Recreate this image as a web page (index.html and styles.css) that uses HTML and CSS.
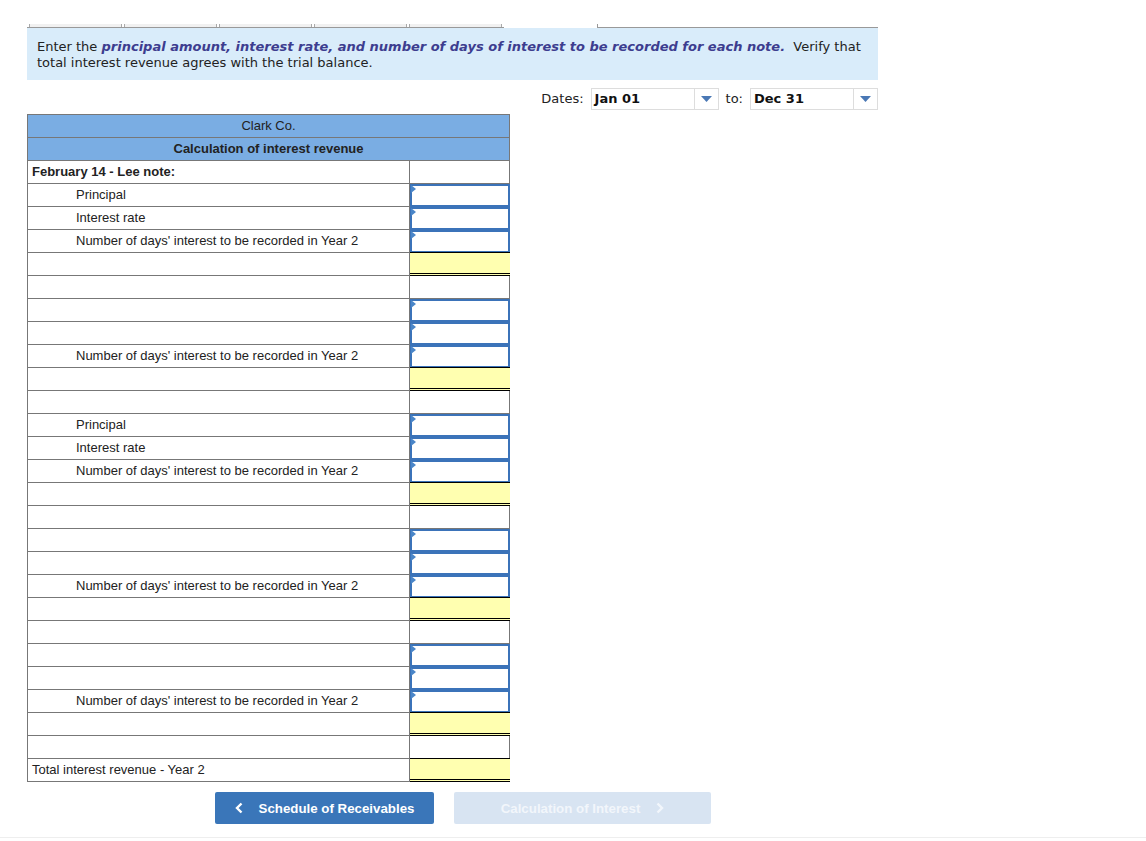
FILE: index.html
```html
<!DOCTYPE html>
<html>
<head>
<meta charset="utf-8">
<link rel="stylesheet" href="styles.css">
</head>
<body>
<div class="page">
  <div class="tabstrip">
    <div class="tabs-left">
      <span class="tab"></span><span class="tab"></span><span class="tab"></span><span class="tab"></span><span class="tab"></span>
    </div>
    <div class="tabs-gap"></div>
    <div class="tabs-right"></div>
  </div>
  <p class="info"><span>Enter the </span><b class="em">principal amount, interest rate, and number of days of interest to be recorded for each note.</b><span>&nbsp; Verify that</span><br><span>total interest revenue agrees with the trial balance.</span></p>
  <div class="dates">
    <span class="dlabel">Dates:</span>
    <div class="select"><span class="sval">Jan 01</span><span class="sarrow"><svg width="11" height="6" viewBox="0 0 11 6"><path d="M0 0H11L5.5 6Z" fill="#4a78b5"/></svg></span></div>
    <span class="dlabel to">to:</span>
    <div class="select"><span class="sval">Dec 31</span><span class="sarrow"><svg width="11" height="6" viewBox="0 0 11 6"><path d="M0 0H11L5.5 6Z" fill="#4a78b5"/></svg></span></div>
  </div>
  <div class="sheet">
    <div class="hrow">Clark Co.</div>
    <div class="hrow bold">Calculation of interest revenue</div>
    <div class="row"><div class="lbl bold">February 14 - Lee note:</div><div class="val"></div></div>
    <div class="row"><div class="lbl ind">Principal</div><div class="val"><div class="inp"></div></div></div>
    <div class="row"><div class="lbl ind">Interest rate</div><div class="val"><div class="inp"></div></div></div>
    <div class="row"><div class="lbl ind">Number of days' interest to be recorded in Year 2</div><div class="val"><div class="inp"></div></div></div>
    <div class="row"><div class="lbl"></div><div class="val"><div class="tot"></div></div></div>
    <div class="row"><div class="lbl"></div><div class="val"></div></div>
    <div class="row"><div class="lbl"></div><div class="val"><div class="inp"></div></div></div>
    <div class="row"><div class="lbl"></div><div class="val"><div class="inp"></div></div></div>
    <div class="row"><div class="lbl ind">Number of days' interest to be recorded in Year 2</div><div class="val"><div class="inp"></div></div></div>
    <div class="row"><div class="lbl"></div><div class="val"><div class="tot"></div></div></div>
    <div class="row"><div class="lbl"></div><div class="val"></div></div>
    <div class="row"><div class="lbl ind">Principal</div><div class="val"><div class="inp"></div></div></div>
    <div class="row"><div class="lbl ind">Interest rate</div><div class="val"><div class="inp"></div></div></div>
    <div class="row"><div class="lbl ind">Number of days' interest to be recorded in Year 2</div><div class="val"><div class="inp"></div></div></div>
    <div class="row"><div class="lbl"></div><div class="val"><div class="tot"></div></div></div>
    <div class="row"><div class="lbl"></div><div class="val"></div></div>
    <div class="row"><div class="lbl"></div><div class="val"><div class="inp"></div></div></div>
    <div class="row"><div class="lbl"></div><div class="val"><div class="inp"></div></div></div>
    <div class="row"><div class="lbl ind">Number of days' interest to be recorded in Year 2</div><div class="val"><div class="inp"></div></div></div>
    <div class="row"><div class="lbl"></div><div class="val"><div class="tot"></div></div></div>
    <div class="row"><div class="lbl"></div><div class="val"></div></div>
    <div class="row"><div class="lbl"></div><div class="val"><div class="inp"></div></div></div>
    <div class="row"><div class="lbl"></div><div class="val"><div class="inp"></div></div></div>
    <div class="row"><div class="lbl ind">Number of days' interest to be recorded in Year 2</div><div class="val"><div class="inp"></div></div></div>
    <div class="row"><div class="lbl"></div><div class="val"><div class="tot"></div></div></div>
    <div class="row"><div class="lbl"></div><div class="val"></div></div>
    <div class="row"><div class="lbl">Total interest revenue - Year 2</div><div class="val"><div class="tot"></div></div></div>
  </div>
  <div class="nav">
    <button class="btn prev"><svg class="chev" width="8" height="12" viewBox="0 0 8 12"><path d="M6.5 1.5L2 6l4.5 4.5" fill="none" stroke="#fff" stroke-width="2.4"/></svg>Schedule of Receivables</button>
    <button class="btn next">Calculation of Interest<svg class="chev r" width="8" height="12" viewBox="0 0 8 12"><path d="M1.5 1.5L6 6l-4.5 4.5" fill="none" stroke="#f2f6fb" stroke-width="2.4"/></svg></button>
  </div>
</div>
<div class="footline"></div>
</body>
</html>
```
FILE: styles.css
```css
html, body { margin: 0; padding: 0; background: #fff; }
body { font-family: "Liberation Sans", Arial, sans-serif; color: #222; }
.page { padding: 24px 0 0 27px; width: 851px; }

.tabstrip { display: flex; height: 4px; }
.tabs-left { display: flex; width: 477px; border-bottom: 1px solid #999; height: 3px; }
.tab { width: 91px; height: 3px; margin-left: 2px; background: #f1f1f1; border-left: 1px solid #aaa; border-right: 1px solid #aaa; }
.tabs-gap { width: 93px; }
.tabs-right { flex: 1; height: 3px; border-bottom: 1px solid #999; border-left: 1px solid #999; }

.info { margin: 0; background: #d9ecfa; font-family: "DejaVu Sans", Verdana, sans-serif; font-size: 13px; line-height: 16px; color: #222; padding: 11px 10px 9px 10px; height: 32px; }
.info .em { color: #3d3d8f; font-style: italic; font-weight: bold; }

.dates { display: flex; justify-content: flex-end; align-items: center; margin-top: 7px; height: 23px; font-family: "DejaVu Sans", Verdana, sans-serif; font-size: 13px; }
.dlabel { margin-right: 7px; color: #222; }
.dlabel.to { margin-left: 7px; }
.select { display: flex; width: 128px; height: 22px; border: 1px solid #ddd; box-sizing: border-box; background: #fff; }
.sval { flex: 1; font-weight: bold; color: #111; padding-left: 3px; line-height: 20px; font-size: 13px; }
.sarrow { width: 23px; border-left: 1px solid #ddd; display: flex; align-items: center; justify-content: center; }

.sheet { margin-top: 4px; width: 483px; border-top: 1px solid #777; border-left: 1px solid #777; box-sizing: border-box; font-size: 13px; }
.hrow { height: 23px; box-sizing: border-box; background: #7aade3; border-bottom: 1px solid #777; border-right: 1px solid #777; text-align: center; line-height: 22px; color: #222; }
.bold { font-weight: bold; }
.row { display: flex; height: 23px; }
.lbl { flex: 1; box-sizing: border-box; border-bottom: 1px solid #777; border-right: 1px solid #777; padding-left: 4px; line-height: 22px; white-space: nowrap; }
.lbl.bold { font-weight: bold; }
.lbl.ind { padding-left: 48px; }
.val { width: 100px; box-sizing: border-box; border-bottom: 1px solid #777; border-right: 1px solid #777; position: relative; }
.inp { position: absolute; left: 0; top: 0; right: -1px; bottom: -1px; border: 2px solid #3b73b9; background: #fff; }
.inp::before { content: ""; position: absolute; left: -1px; top: -1px; border-top: 4px solid transparent; border-bottom: 4px solid transparent; border-left: 5px solid #4a86c8; }
.tot { position: absolute; left: 0; top: -1px; right: -1px; bottom: -1px; background: #ffffb0; border-top: 1px solid #000; border-bottom: 3px double #000; }

.nav { display: flex; gap: 20px; margin: 10px 0 0 188px; }
.btn { height: 32px; border: none; border-radius: 2px; font-family: "Liberation Sans", Arial, sans-serif; font-weight: bold; font-size: 13.3px; color: #fff; padding: 0; display: flex; align-items: center; justify-content: center; }
.btn.prev { width: 219px; background: #3a76b9; }
.btn.next { width: 257px; background: #d8e4f2; color: #f2f6fb; }
.chev { margin-right: 16px; }
.chev.r { margin: 0 0 0 16px; }

.footline { margin-top: 13px; border-top: 1px solid #eee; }
```
